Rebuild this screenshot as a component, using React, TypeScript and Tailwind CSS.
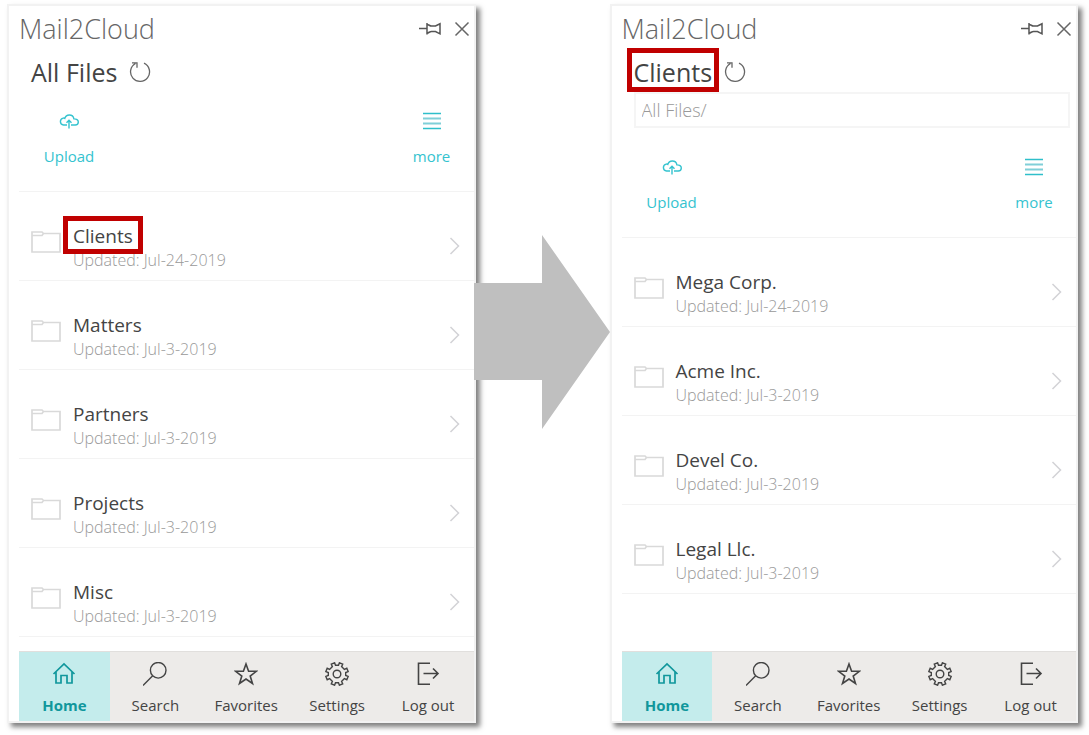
import * as React from "react";
import clsx from "clsx";

type Item = {
  name: string;
  updated: string;
  marked?: boolean;
};

type PanelProps = {
  title: string;
  items: Item[];
  path?: string;
  titleMarked?: boolean;
};

const rootItems: Item[] = [
  { name: "Clients", updated: "Jul-24-2019", marked: true },
  { name: "Matters", updated: "Jul-3-2019" },
  { name: "Partners", updated: "Jul-3-2019" },
  { name: "Projects", updated: "Jul-3-2019" },
  { name: "Misc", updated: "Jul-3-2019" },
];

const clientItems: Item[] = [
  { name: "Mega Corp.", updated: "Jul-24-2019" },
  { name: "Acme Inc.", updated: "Jul-3-2019" },
  { name: "Devel Co.", updated: "Jul-3-2019" },
  { name: "Legal Llc.", updated: "Jul-3-2019" },
];

const PinIcon = () => (
  <svg width="24" height="14" viewBox="0 0 24 14" fill="none" stroke="#555" strokeWidth="1.5">
    <path d="M1 6.500h8M9 1v11.500M9 2.500c2 0 2.500 1.500 4.500 1.500h4L22 1.800v10L17.500 9.500h-4C11.500 9.500 11 11 9 11" />
  </svg>
);

const CloseIcon = () => (
  <svg width="16" height="16" viewBox="0 0 16 16" fill="none" stroke="#666" strokeWidth="1.5">
    <path d="M1.500 1.500l13 13M14.500 1.500l-13 13" />
  </svg>
);

const RefreshIcon = () => (
  <svg width="22" height="22" viewBox="0 0 22 22" fill="none" stroke="#666" strokeWidth="1.3">
    <path d="M15 2.200A9.500 9.500 0 1 1 6.500 2.500M3 1.800h5v5" />
  </svg>
);

const CloudIcon = () => (
  <svg width="20" height="15" viewBox="0 0 20 15" fill="none" stroke="#35c3cf" strokeWidth="1.4">
    <path d="M8 11H4.500a3.500 3.500 0 0 1-.3-6.900C5 4 5.500 4.200 5.800 4.400 6.500 2 8.300 1 10.300 1c2.500 0 4.200 1.600 4.600 3.900 2.500-.1 4.400 1.100 4.400 3.200 0 1.700-1.300 2.900-3 2.900H12" />
    <path d="M10 14.500V6.500M7.500 8.800L10 6.300l2.500 2.500" />
  </svg>
);

const LinesIcon = () => (
  <svg width="18" height="18" viewBox="0 0 18 18" fill="none" strokeWidth="1.4">
    <path d="M0 1.500h18M0 16.500h18" stroke="#2fbfca" />
    <path d="M0 6.500h18M0 11.500h18" stroke="#80cfd8" strokeWidth="2" />
  </svg>
);

const FolderIcon = () => (
  <svg className="mb-3" width="30" height="22" viewBox="0 0 30 22" fill="none" stroke="#d9d9d9" strokeWidth="1.7">
    <path d="M1 21V1h10l1.500 1.500H29V21zM1 4.500h10l1.500-2" />
  </svg>
);

const ChevronIcon = () => (
  <svg className="mb-1" width="11" height="18" viewBox="0 0 11 18" fill="none" stroke="#d2d2d6" strokeWidth="1.5">
    <path d="M1.500 1l8 8-8 8" />
  </svg>
);

const navItems = [
  {
    label: "Home",
    icon: <path d="M1.500 12L12 2l10.500 10M4 10v11h5v-7.500h6V21h5V10" strokeWidth="1.7" />,
  },
  {
    label: "Search",
    icon: <path d="M23 8.300a7.800 7.800 0 1 1-15.600 0 7.800 7.800 0 0 1 15.600 0zM9.700 13.800L0 23.500" />,
  },
  {
    label: "Favorites",
    icon: (
      <path d="M12 2l2.600 7.300h7.800l-6.200 4.700 2.300 7.500L12 17l-6.500 4.500L7.800 14 1.600 9.300h7.800z" strokeWidth="1.6" />
    ),
  },
  {
    label: "Settings",
    icon: (
      <>
        <circle cx="12" cy="12" r="3.800" />
        <path d="M9.600 0.800l.9 2.500h3l.9-2.500 3.300 1.400-1.100 2.400 2.800 2.800 2.400-1.100 1.400 3.300-2.500.9v3l2.500.9-1.400 3.300-2.400-1.100-2.800 2.800 1.100 2.400-3.300 1.400-.9-2.500h-3l-.9 2.500-3.300-1.400 1.100-2.400-2.800-2.800-2.400 1.100L.8 14.400l2.500-.9v-3L.8 9.600l1.400-3.300 2.400 1.100 2.800-2.800-1.100-2.400z" />
      </>
    ),
  },
  {
    label: "Log out",
    icon: <path d="M14 1.200H2.500v21H14M7.500 11.500H22M17 6.500l5 5-5 5" strokeWidth="1.6" />,
  },
];

// red frame drawn over the folder that is opened
const Frame = ({ className }: { className: string }) => (
  <span aria-hidden="true" className={clsx("absolute border-[5px] border-[#c00000]", className)} />
);

const Row = ({ item }: { item: Item }) => (
  <li className="border-b border-[#f3f3f3]">
    <a href="#" className="flex items-center pl-3 pr-3.5 pt-8 pb-2">
      <FolderIcon />
      <span className="ml-3 flex flex-1 flex-col items-start">
        <span className="relative text-[19px] leading-6 text-[#444]">
          {item.name}
          {item.marked && <Frame className="-inset-x-2.5 -top-2 -bottom-1.5 z-10" />}
        </span>
        <span className="text-base font-light leading-6 text-[#999]">Updated: {item.updated}</span>
      </span>
      <ChevronIcon />
    </a>
  </li>
);

const Panel = ({ title, items, path, titleMarked }: PanelProps) => (
  <section className="flex min-w-0 flex-1 flex-col border-2 border-[#f2f2f2] bg-white pl-2.5 shadow-[4px_4px_5px_rgba(0,0,0,0.5)]">
    <header className="flex h-[46px] items-center justify-between pr-1">
      <h1 className="text-[27px] font-light text-[#666]">Mail2Cloud</h1>
      <div className="flex items-center gap-3">
        <button aria-label="Pin">
          <PinIcon />
        </button>
        <button aria-label="Close">
          <CloseIcon />
        </button>
      </div>
    </header>

    <div className="flex h-10 items-center gap-3 pl-3">
      <h2 className="relative text-[25px] leading-10 text-[#444]">
        {title}
        {titleMarked && <Frame className="-inset-x-[7px] -top-1 bottom-0" />}
      </h2>
      <button aria-label="Refresh">
        <RefreshIcon />
      </button>
    </div>
    {path && (
      <input
        aria-label="Path"
        readOnly
        value={path}
        className="mb-2.5 ml-3 mr-1.5 h-9 border-2 border-[#f5f5f5] px-1.5 text-lg font-light text-[#999] outline-none"
      />
    )}

    {/* Toolbar */}
    <div className="flex h-[100px] justify-between border-b border-[#f3f3f3] pl-2.5 pr-0.5 pt-[19px] text-[15px] text-[#35c3cf]">
      <button className="flex w-20 flex-col items-center gap-3.5 self-start">
        <span className="flex h-5 items-center">
          <CloudIcon />
        </span>
        <span>Upload</span>
      </button>
      <button className="flex w-20 flex-col items-center gap-3.5 self-start">
        <span className="flex h-5 items-center">
          <LinesIcon />
        </span>
        <span>more</span>
      </button>
    </div>

    <ul>
      {items.map((item) => (
        <Row key={item.name} item={item} />
      ))}
    </ul>

    {/* Bottom navigation */}
    <nav className="mt-auto grid grid-cols-5 border-t border-[#e1dfdd] bg-[#edebe9]">
      {navItems.map(({ label, icon }, i) => (
        <button
          key={label}
          className={clsx(
            "flex h-[69px] flex-col items-center gap-2 pt-2.5 text-[15px]",
            i === 0 ? "bg-[#c4ecec] font-bold text-[#10979c]" : "text-[#444]"
          )}
        >
          <svg width="24" height="24" viewBox="0 0 24 24" fill="none" stroke="currentColor" strokeWidth="1.4">
            {icon}
          </svg>
          <span>{label}</span>
        </button>
      ))}
    </nav>
  </section>
);

export default function App() {
  return (
    <main className="flex min-h-screen bg-white pt-1 pr-[11px] pb-3 pl-[7px] font-['Open_Sans',sans-serif]">
      <Panel title="All Files" items={rootItems} />
      <svg
        className="relative z-10 -ml-0.5 mt-[231px] shrink-0"
        width="136"
        height="194"
        viewBox="0 0 136 194"
        aria-hidden="true"
      >
        <path d="M0 48H68V0L136 97L68 194V145H0z" fill="#bfbfbf" />
      </svg>
      <Panel title="Clients" items={clientItems} path="All Files/" titleMarked />
    </main>
  );
}
